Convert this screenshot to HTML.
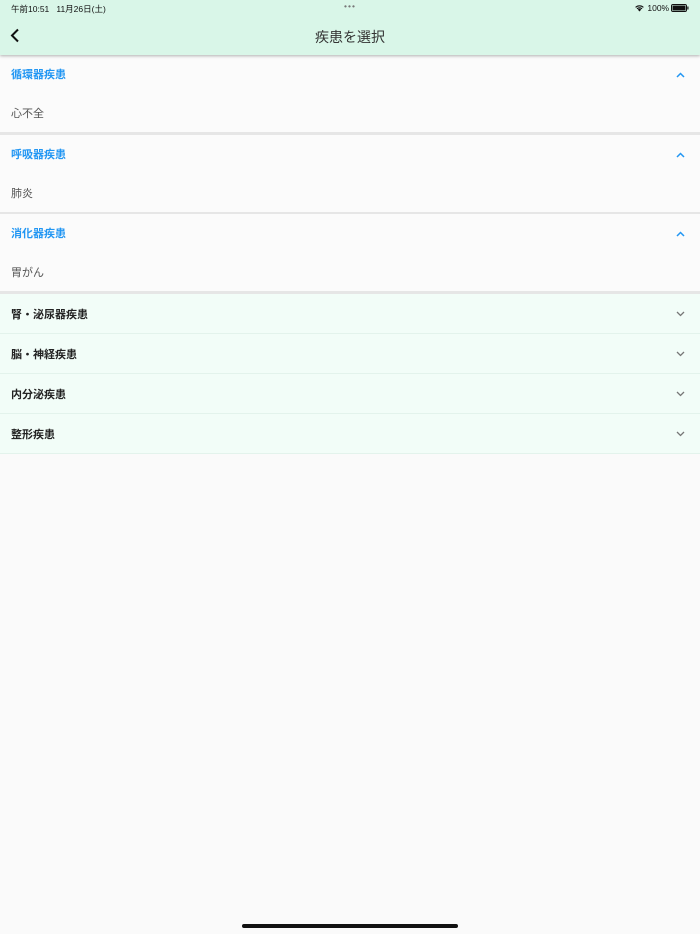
<!DOCTYPE html><html><head><meta charset="utf-8"><style>
*{margin:0;padding:0;box-sizing:border-box}
body{width:700px;height:934px;background:#fafafa;font-family:"Liberation Sans","Noto Sans CJK JP",sans-serif;position:relative;overflow:hidden}
.top{position:absolute;left:0;top:0;width:700px;height:55px;background:#d9f6e8;box-shadow:0 1px 3px rgba(0,0,0,.3);z-index:2}
.st{position:absolute;top:3px;font-size:8.5px;color:#111}
.title{position:absolute;top:27px;width:100%;text-align:center;font-size:14px;color:#333}
.sec{position:absolute;left:0;width:700px;background:#fbfbfb;border-bottom:3px solid #e6e6e6}
.sh{height:39px;position:relative}
.sh span{position:absolute;left:11px;top:11px;font-size:11px;font-weight:bold;color:#2196f3}
.it{height:38px;position:relative}
.it span{position:absolute;left:11px;top:11px;font-size:11px;color:#555}
.row{position:absolute;left:0;width:700px;height:40px;background:#f2fdf8;border-bottom:1px solid #e3f3ec}
.row span{position:absolute;left:11px;top:12px;font-size:11px;font-weight:bold;color:#222}
svg.ch{position:absolute;right:15px;top:17px}
</style></head><body>
<div class="top">
<div class="st" style="left:11px">午前10:51&nbsp;&nbsp;&nbsp;11月26日(土)</div>
<div class="st" style="left:344px;top:1px;letter-spacing:1px;color:#777">•••</div>
<div class="st" style="left:634px">
<svg width="11" height="8" viewBox="0 0 11 8" style="vertical-align:-1px"><path d="M5.5 7.5L3.8 5.6a2.5 2.5 0 0 1 3.4 0Z M2.6 4.4a4.2 4.2 0 0 1 5.8 0l-.8.8a3 3 0 0 0-4.2 0Z M1.2 3a6.2 6.2 0 0 1 8.6 0l-.8.8a5 5 0 0 0-7 0Z" fill="#111"/></svg> 100%
<svg width="18" height="8" viewBox="0 0 18 8" style="vertical-align:-1px"><rect x=".5" y=".5" width="15" height="7" rx="1.5" fill="none" stroke="#111"/><rect x="1.5" y="1.5" width="13" height="5" rx=".8" fill="#111"/><rect x="16.3" y="2.5" width="1.2" height="3" fill="#111"/></svg></div>
<svg style="position:absolute;left:10px;top:28px" width="10" height="15" viewBox="0 0 10 15"><path d="M8 1.5L2 7.5l6 6" fill="none" stroke="#111" stroke-width="2"/></svg>
<div class="title">疾患を選択</div>
</div>
<div class="sec" style="top:55px;height:80px"><div class="sh"><span>循環器疾患</span><svg class="ch" width="9" height="6" viewBox="0 0 9 6"><path d="M1 5l3.5-3.5L8 5" fill="none" stroke="#2196f3" stroke-width="1.5"/></svg></div><div class="it"><span>心不全</span></div></div>
<div class="sec" style="top:135px;height:80px"><div class="sh"><span>呼吸器疾患</span><svg class="ch" width="9" height="6" viewBox="0 0 9 6"><path d="M1 5l3.5-3.5L8 5" fill="none" stroke="#2196f3" stroke-width="1.5"/></svg></div><div class="it"><span>肺炎</span></div></div>
<div class="sec" style="top:214px;height:80px"><div class="sh"><span>消化器疾患</span><svg class="ch" width="9" height="6" viewBox="0 0 9 6"><path d="M1 5l3.5-3.5L8 5" fill="none" stroke="#2196f3" stroke-width="1.5"/></svg></div><div class="it"><span>胃がん</span></div></div>
<div class="row" style="top:294px"><span>腎・泌尿器疾患</span><svg class="ch" width="9" height="6" viewBox="0 0 9 6"><path d="M1 1l3.5 3.5L8 1" fill="none" stroke="#777" stroke-width="1.3"/></svg></div>
<div class="row" style="top:334px"><span>脳・神経疾患</span><svg class="ch" width="9" height="6" viewBox="0 0 9 6"><path d="M1 1l3.5 3.5L8 1" fill="none" stroke="#777" stroke-width="1.3"/></svg></div>
<div class="row" style="top:374px"><span>内分泌疾患</span><svg class="ch" width="9" height="6" viewBox="0 0 9 6"><path d="M1 1l3.5 3.5L8 1" fill="none" stroke="#777" stroke-width="1.3"/></svg></div>
<div class="row" style="top:414px"><span>整形疾患</span><svg class="ch" width="9" height="6" viewBox="0 0 9 6"><path d="M1 1l3.5 3.5L8 1" fill="none" stroke="#777" stroke-width="1.3"/></svg></div>
<div style="position:absolute;left:242px;top:924px;width:216px;height:4px;border-radius:2px;background:#111"></div>
</body></html>
